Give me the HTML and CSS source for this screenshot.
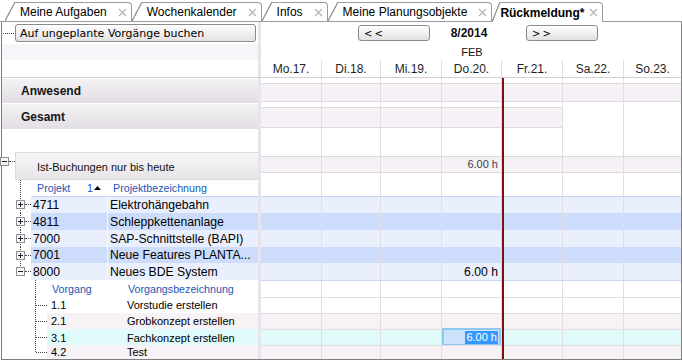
FILE: index.html
```html
<!DOCTYPE html>
<html lang="de">
<head>
    <meta charset="UTF-8">
    <meta name="viewport" content="width=device-width, initial-scale=1.0">
    <title>Rückmeldung</title>
    <link rel="stylesheet" href="styles.css">
</head>
<body>
    <!-- Reiter -->
    <div class="tabs">
        <div class="tab"><span>Meine Aufgaben</span><svg class="close" viewBox="0 0 9 9"><path d="M1 1l7 7M8 1L1 8"/></svg></div>
        <div class="tab"><span>Wochenkalender</span><svg class="close" viewBox="0 0 9 9"><path d="M1 1l7 7M8 1L1 8"/></svg></div>
        <div class="tab"><span>Infos</span><svg class="close" viewBox="0 0 9 9"><path d="M1 1l7 7M8 1L1 8"/></svg></div>
        <div class="tab"><span>Meine Planungsobjekte</span><svg class="close" viewBox="0 0 9 9"><path d="M1 1l7 7M8 1L1 8"/></svg></div>
        <div class="tab active"><span>Rückmeldung*</span><svg class="close" viewBox="0 0 9 9"><path d="M1 1l7 7M8 1L1 8"/></svg></div>
    </div>

    <div class="frame">
        <!-- Werkzeugleiste -->
        <div class="row tool">
            <div class="left"><span class="hdots"></span><button class="btn book">Auf ungeplante Vorgänge buchen</button></div>
            <div class="sep"></div>
            <div class="nav">
                <button class="btn step">&lt;&lt;</button>
                <b class="period">8/2014</b>
                <button class="btn step">&gt;&gt;</button>
            </div>
        </div>

        <div class="row month">
            <div class="left"></div>
            <div class="sep"></div>
            <div class="days"><span></span><span></span><span></span><span>FEB</span><span></span><span></span><span></span></div>
        </div>

        <div class="row dhead">
            <div class="left"></div>
            <div class="sep"></div>
            <div class="days"><span>Mo.17.</span><span>Di.18.</span><span>Mi.19.</span><span>Do.20.</span><span>Fr.21.</span><span>Sa.22.</span><span>So.23.</span></div>
        </div>

        <!-- Summenzeilen -->
        <div class="row anw">
            <div class="left sum">Anwesend</div>
            <div class="sep"></div>
            <div class="days band"><span></span><span></span><span></span><span></span><span></span><span></span><span></span></div>
        </div>

        <div class="row ges">
            <div class="left sum">Gesamt</div>
            <div class="sep"></div>
            <div class="days band"><span></span><span></span><span></span><span></span><span></span><span class="off"></span><span class="off"></span></div>
        </div>

        <div class="row gap">
            <div class="left"></div>
            <div class="sep"></div>
            <div class="days"><span></span><span></span><span></span><span></span><span></span><span></span><span></span></div>
        </div>

        <div class="row ist">
            <div class="left">
                <svg class="tg" viewBox="0 0 9 9"><rect x=".5" y=".5" width="8" height="8"/><path d="M2 4.5h5"/></svg>
                <span class="hdots"></span>
                <div class="istcell">Ist-Buchungen nur bis heute</div>
            </div>
            <div class="sep"></div>
            <div class="days band"><span></span><span></span><span></span><span class="val">6.00 h</span><span></span><span></span><span></span></div>
        </div>

        <!-- Projekte -->
        <div class="row phead">
            <div class="left">
                <span class="tree pt"></span>
                <div class="cols"><span class="c1">Projekt<em class="sort">1<svg viewBox="0 0 7 4"><path d="M0 4L3.5 0L7 4z"/></svg></em></span><span class="c2">Projektbezeichnung</span></div>
            </div>
            <div class="sep"></div>
            <div class="days"><span></span><span></span><span></span><span></span><span></span><span></span><span></span></div>
        </div>

        <div class="row proj first">
            <div class="left">
                <span class="tree pt"><svg class="tg" viewBox="0 0 9 9"><rect x=".5" y=".5" width="8" height="8"/><path d="M2 4.5h5M4.5 2v5"/></svg><span class="hdots"></span></span>
                <div class="cols"><span class="c1">4711</span><span class="c2">Elektrohängebahn</span></div>
            </div>
            <div class="sep"></div>
            <div class="days"><span></span><span></span><span></span><span></span><span></span><span></span><span></span></div>
        </div>

        <div class="row proj dark">
            <div class="left">
                <span class="tree pt"><svg class="tg" viewBox="0 0 9 9"><rect x=".5" y=".5" width="8" height="8"/><path d="M2 4.5h5M4.5 2v5"/></svg><span class="hdots"></span></span>
                <div class="cols"><span class="c1">4811</span><span class="c2">Schleppkettenanlage</span></div>
            </div>
            <div class="sep"></div>
            <div class="days"><span></span><span></span><span></span><span></span><span></span><span></span><span></span></div>
        </div>

        <div class="row proj">
            <div class="left">
                <span class="tree pt"><svg class="tg" viewBox="0 0 9 9"><rect x=".5" y=".5" width="8" height="8"/><path d="M2 4.5h5M4.5 2v5"/></svg><span class="hdots"></span></span>
                <div class="cols"><span class="c1">7000</span><span class="c2">SAP-Schnittstelle (BAPI)</span></div>
            </div>
            <div class="sep"></div>
            <div class="days"><span></span><span></span><span></span><span></span><span></span><span></span><span></span></div>
        </div>

        <div class="row proj dark short">
            <div class="left">
                <span class="tree pt"><svg class="tg" viewBox="0 0 9 9"><rect x=".5" y=".5" width="8" height="8"/><path d="M2 4.5h5M4.5 2v5"/></svg><span class="hdots"></span></span>
                <div class="cols"><span class="c1">7001</span><span class="c2">Neue Features PLANTA...</span></div>
            </div>
            <div class="sep"></div>
            <div class="days"><span></span><span></span><span></span><span></span><span></span><span></span><span></span></div>
        </div>

        <div class="row proj">
            <div class="left">
                <span class="tree pt end"><svg class="tg" viewBox="0 0 9 9"><rect x=".5" y=".5" width="8" height="8"/><path d="M2 4.5h5"/></svg><span class="hdots"></span></span>
                <div class="cols"><span class="c1">8000</span><span class="c2">Neues BDE System</span></div>
            </div>
            <div class="sep"></div>
            <div class="days"><span></span><span></span><span></span><span class="val">6.00 h</span><span></span><span></span><span></span></div>
        </div>

        <!-- Vorgänge -->
        <div class="row thead">
            <div class="left">
                <span class="tree tt"></span>
                <div class="cols"><span class="c1">Vorgang</span><span class="c2">Vorgangsbezeichnung</span></div>
            </div>
            <div class="sep"></div>
            <div class="days"><span></span><span></span><span></span><span></span><span></span><span></span><span></span></div>
        </div>

        <div class="row task">
            <div class="left">
                <span class="tree tt"><span class="hdots"></span></span>
                <div class="cols"><span class="c1">1.1</span><span class="c2">Vorstudie erstellen</span></div>
            </div>
            <div class="sep"></div>
            <div class="days"><span></span><span></span><span></span><span></span><span></span><span></span><span></span></div>
        </div>

        <div class="row task pink">
            <div class="left">
                <span class="tree tt"><span class="hdots"></span></span>
                <div class="cols"><span class="c1">2.1</span><span class="c2">Grobkonzept erstellen</span></div>
            </div>
            <div class="sep"></div>
            <div class="days"><span></span><span></span><span></span><span></span><span></span><span></span><span></span></div>
        </div>

        <div class="row task cyan">
            <div class="left">
                <span class="tree tt"><span class="hdots"></span></span>
                <div class="cols"><span class="c1">3.1</span><span class="c2">Fachkonzept erstellen</span></div>
            </div>
            <div class="sep"></div>
            <div class="days"><span></span><span></span><span></span><span class="editcell"><span class="edit"><mark>6.00 h</mark></span></span><span></span><span></span><span></span></div>
        </div>

        <div class="row task pink last">
            <div class="left">
                <span class="tree tt end"><span class="hdots"></span></span>
                <div class="cols"><span class="c1">4.2</span><span class="c2">Test</span></div>
            </div>
            <div class="sep"></div>
            <div class="days"><span></span><span></span><span></span><span></span><span></span><span></span><span></span></div>
        </div>

        <!-- Heute-Markierung -->
        <div class="today"></div>
    </div>
</body>
</html>
```

FILE: styles.css
```css
* {
    box-sizing: border-box;
}

body {
    margin: 0;
    width: 682px;
    height: 362px;
    overflow: hidden;
    background: #fff;
    font-family: "Liberation Sans", Arial, sans-serif;
    font-size: 12px;
    color: #000;
}

/* Reiter */
.tabs {
    display: flex;
    align-items: flex-end;
    height: 22px;
    padding-left: 5px;
    border-bottom: 1px solid #9b9b9b;
}

.tab {
    position: relative;
    display: flex;
    align-items: center;
    height: 19px;
    margin-left: 10px;
    padding: 0 4px 0 5px;
    border-top: 1px solid #9b9b9b;
    border-right: 1px solid #9b9b9b;
    border-top-right-radius: 4px;
    background: #fff;
    white-space: nowrap;
}

.tab::before {
    content: "";
    position: absolute;
    left: -10px;
    top: -1px;
    bottom: 0;
    width: 10px;
    background: linear-gradient(to bottom right, transparent calc(50% - 1px), #9b9b9b calc(50% - 0.4px), #9b9b9b calc(50% + 0.4px), #fff calc(50% + 1px));
}

.tab.active {
    height: 20px;
    margin-bottom: -1px;
    margin-left: 8px;
    padding-left: 0;
    font-weight: bold;
}

.tab.active::before {
    left: -8px;
    width: 8px;
}

.close {
    flex: none;
    width: 9px;
    height: 9px;
    margin-left: 11px;
    fill: none;
    stroke: #b3b3b3;
    stroke-width: 1.2;
}

.tab.active .close {
    margin-left: 5px;
}

/* Rahmen und Zeilen */
.frame {
    position: relative;
    width: 681px;
    margin-left: 1px;
    border: 1px solid #7f7f7f;
    border-top: 0;
}

.row {
    display: grid;
    grid-template-columns: 256px 3px 420px;
}

.sep {
    background: #e8e4ec;
}

.left {
    display: flex;
    align-items: center;
    min-width: 0;
}

.days {
    display: grid;
    grid-template-columns: 61px 59px 61px 60px 61px 61px 57px;
}

.days > span {
    min-width: 0;
    border-right: 1px solid #e1dde1;
}

.days > span:last-child {
    border-right: 0;
}

.hdots {
    flex: none;
    height: 0;
    border-top: 1px dotted #444;
}

/* Werkzeugleiste */
.tool {
    height: 22px;
}

.tool .left {
    padding-left: 1px;
}

.tool .hdots {
    width: 11px;
    margin-right: 1px;
}

.btn {
    display: flex;
    align-items: center;
    height: 18px;
    margin: 0;
    padding: 0 0 0 4px;
    border: 1px solid #8b8b8b;
    border-radius: 3px;
    background: linear-gradient(#fefefe, #e2e2e2);
    box-shadow: inset 0 1px 0 #fff;
    font-family: "DejaVu Sans", Verdana, sans-serif;
    font-size: 11px;
    color: #000;
}

.book {
    width: 241px;
}

.nav {
    display: flex;
    align-items: center;
    padding-left: 97px;
}

.step {
    width: 72px;
    height: 16px;
    padding-left: 5px;
    font-size: 10px;
    letter-spacing: 2px;
}

.period {
    width: 78px;
    margin-right: 18px;
    text-align: center;
    font-size: 12px;
    color: #111;
}

/* Kopfzeilen Kalender */
.month {
    height: 16px;
}

.month .left {
    background: #f6f6fa;
}

.month .days > span {
    border: 0;
    display: flex;
    align-items: center;
    justify-content: center;
    font-size: 11px;
    color: #111;
}

.dhead {
    height: 18px;
    border-bottom: 1px solid #d2ced2;
}

.dhead .days > span {
    display: flex;
    align-items: center;
    justify-content: center;
    color: #1e1e1e;
}

/* Summen */
.anw {
    height: 26px;
}

.ges {
    height: 25px;
}

.gap {
    height: 23px;
}

.sum {
    padding-left: 19px;
    background: linear-gradient(#f4f2f4, #e2dee4);
    font-weight: bold;
    color: #161616;
}

.anw .sum {
    margin: 1px 0;
}

.band > span {
    background:
        linear-gradient(#dcd8dc, #dcd8dc) 0 var(--t) / 100% 1px no-repeat,
        linear-gradient(#dcd8dc, #dcd8dc) 0 calc(var(--t) + var(--h) - 1px) / 100% 1px no-repeat,
        linear-gradient(#f6f1f6, #f6f1f6) 0 var(--t) / 100% var(--h) no-repeat;
}

.band > span.off {
    background: none;
}

.anw .band {
    --t: 5px;
    --h: 19px;
}

.ges .band {
    --t: 3px;
    --h: 21px;
}

.ist .band {
    --t: 4px;
    --h: 17px;
}

.val {
    display: flex;
    align-items: center;
    justify-content: flex-end;
    padding-right: 3px;
    white-space: nowrap;
}

/* Ist-Buchungen */
.ist {
    height: 28px;
}

.ist .left {
    align-items: flex-start;
}

.tg {
    flex: none;
    width: 9px;
    height: 9px;
}

.tg rect {
    fill: #f6f6f6;
    stroke: #8f8f8f;
}

.tg path {
    stroke: #1f1f3a;
}

.ist .tg {
    margin: 5px 0 0 -2px;
}

.ist .hdots {
    width: 6px;
    margin-top: 9px;
}

.istcell {
    flex: 1;
    align-self: stretch;
    display: flex;
    align-items: center;
    padding: 2px 0 0 21px;
    border: 1px solid #dcd8dc;
    border-right: 0;
    background: linear-gradient(#f7f5f7, #e8e5e9);
    font-size: 11px;
    color: #111;
}

.ist .val {
    align-items: flex-start;
    padding-top: 6px;
    font-size: 11px;
    color: #444;
}

/* Baumstruktur */
.tree {
    flex: none;
    align-self: stretch;
    display: flex;
    align-items: center;
    background: repeating-linear-gradient(#444 0 1px, transparent 1px 2px) 18px 0 / 1px 100% no-repeat;
}

.tree .hdots {
    flex: 1;
}

.pt {
    width: 29px;
    padding-left: 14px;
}

.tt {
    width: 45px;
    padding-left: 34px;
    background-position: 33px 0;
}

.tree.end {
    background-size: 1px 50%;
}

.cols {
    flex: 1;
    align-self: stretch;
    display: flex;
    min-width: 0;
}

.c1 {
    flex: none;
    width: 76px;
    display: flex;
    align-items: center;
}

.c2 {
    flex: 1;
    display: flex;
    align-items: center;
    min-width: 0;
    white-space: nowrap;
    overflow: hidden;
}

/* Projekte */
.phead {
    height: 16px;
}

.phead .cols,
.thead .cols {
    font-size: 10.7px;
    color: #2356b5;
}

.phead .c1 {
    justify-content: space-between;
    padding: 0 6px;
}

.phead .c2 {
    padding-left: 5px;
    border-left: 1px solid transparent;
}

.sort {
    display: flex;
    align-items: center;
    font-style: normal;
}

.sort svg {
    width: 7px;
    height: 4px;
    margin-left: 1px;
    fill: #000;
}

.proj {
    height: 17px;
    font-size: 12.2px;
}

.proj.short {
    height: 16px;
}

.proj .cols,
.proj .days {
    background: #e9effd;
}

.proj.dark .cols,
.proj.dark .days {
    background: #cddcfb;
}

.proj.first .cols,
.proj.first .days {
    box-shadow: inset 0 1px #c4d4f4;
}

.proj .c1 {
    padding-left: 2px;
}

.proj .c2 {
    padding-left: 2px;
    border-left: 1px solid #f3f6fe;
}

/* Vorgänge */
.thead {
    height: 17px;
}

.thead .days {
    border-top: 1px solid #c9d7f5;
}

.thead .c1,
.thead .c2 {
    padding-left: 5px;
}

.task {
    height: 16px;
    font-size: 11px;
}

.task.last {
    height: 14px;
}

.task .days {
    border-top: 1px solid #e2dee2;
}

.task .c1,
.task .c2 {
    padding-left: 4px;
}

.task.pink .cols,
.task.pink .days {
    background: #f6f2f6;
}

.task.cyan .cols,
.task.cyan .days {
    background: #e1fbfb;
}

.editcell {
    display: flex;
}

.edit {
    flex: 1;
    display: flex;
    align-items: center;
    justify-content: flex-end;
    height: 18px;
    margin-top: -2px;
    padding-right: 1px;
    border: 2px solid #8ec9f2;
    background: #cde2fb;
}

.edit mark {
    padding: 0 0 0 1px;
    border-right: 1px solid #d9760a;
    background: #3399ff;
    color: #fff;
    line-height: 13px;
}

/* Linie für den heutigen Tag */
.today {
    position: absolute;
    left: 500px;
    top: 56px;
    bottom: 0;
    width: 2px;
    background: #7b1111;
}
```
